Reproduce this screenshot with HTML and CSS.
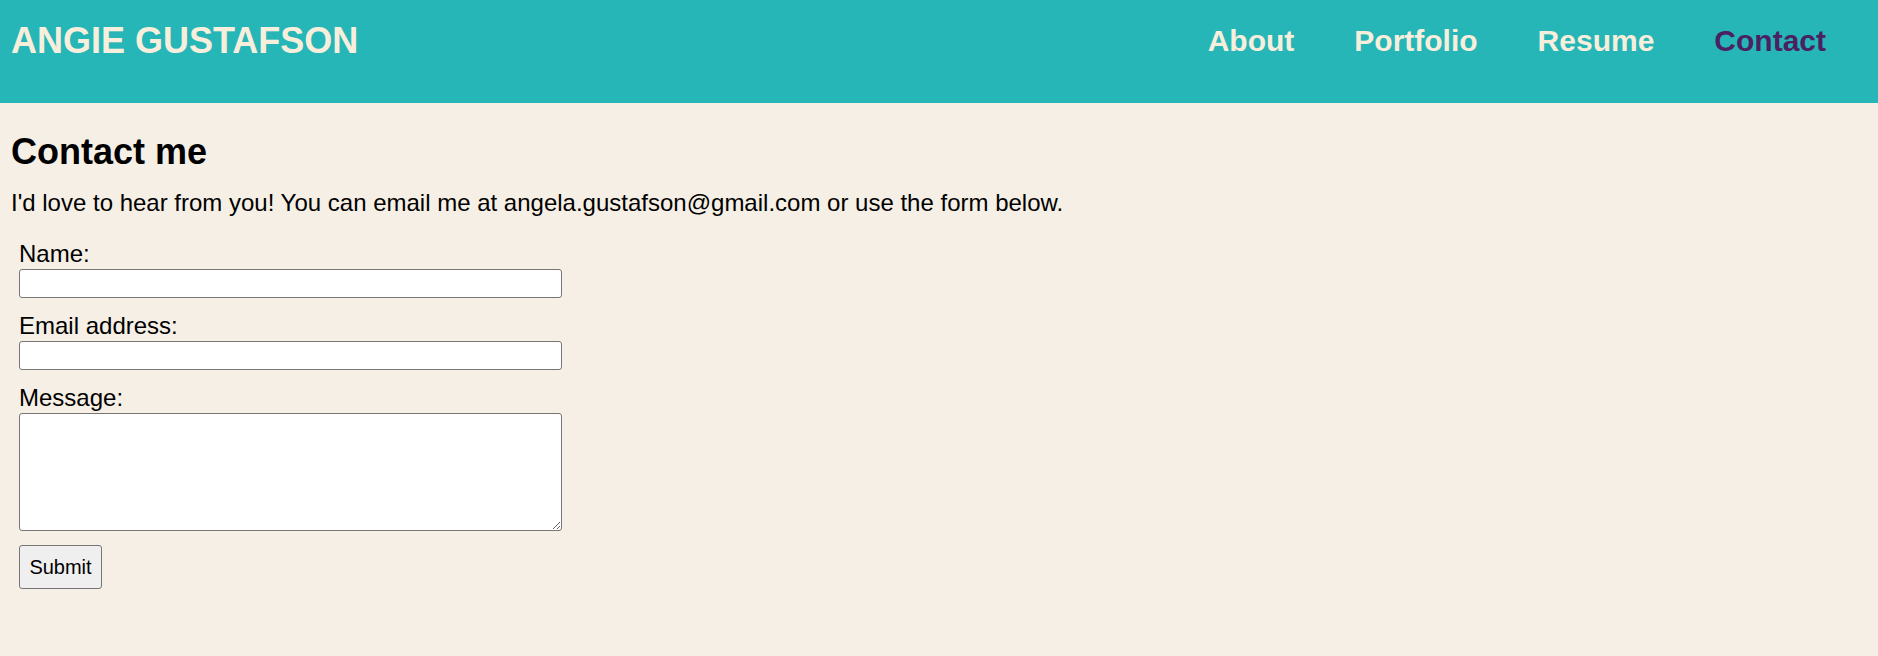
FILE: index.html
```html
<!DOCTYPE html>
<html lang="en">
<head>
<meta charset="utf-8">
<title>Contact - Angie Gustafson</title>
<link rel="stylesheet" href="styles.css">
</head>
<body>
<header class="site-header">
  <div class="brand">ANGIE GUSTAFSON</div>
  <nav class="nav">
    <a class="nav-link" href="#">About</a>
    <a class="nav-link" href="#">Portfolio</a>
    <a class="nav-link" href="#">Resume</a>
    <a class="nav-link active" href="#">Contact</a>
  </nav>
</header>
<main class="content">
  <h1 class="title">Contact me</h1>
  <p class="intro">I'd love to hear from you! You can email me at angela.gustafson@gmail.com or use the form below.</p>
  <form class="contact-form">
    <div class="field">
      <label class="label" for="name">Name:</label>
      <input class="input" id="name" type="text">
    </div>
    <div class="field">
      <label class="label" for="email">Email address:</label>
      <input class="input" id="email" type="email">
    </div>
    <div class="field">
      <label class="label" for="msg">Message:</label>
      <textarea class="textarea" id="msg"></textarea>
    </div>
    <button class="submit" type="submit">Submit</button>
  </form>
</main>
</body>
</html>
```
FILE: styles.css
```css
* { box-sizing: border-box; }
html, body {
  margin: 0;
  padding: 0;
}
body {
  background: #f6efe5;
  color: #000;
  font-family: "Liberation Sans", Arial, sans-serif;
  font-size: 24px;
}
.site-header {
  height: 103px;
  background: #26b6b7;
  display: flex;
  justify-content: space-between;
  align-items: flex-start;
  padding: 20px 52px 0 11px;
}
.brand {
  color: #f8eedc;
  font-size: 36px;
  font-weight: bold;
  line-height: 42px;
}
.nav {
  display: flex;
  gap: 60px;
  padding-top: 3px;
}
.nav-link {
  color: #f8eedc;
  font-size: 30px;
  font-weight: bold;
  line-height: 36px;
  text-decoration: none;
}
.nav-link.active {
  color: #4a2262;
}
.content {
  padding: 28px 11px 0 11px;
}
.title {
  margin: 0;
  font-size: 36px;
  font-weight: bold;
  line-height: 42px;
}
.intro {
  margin: 16px 0 23px 0;
  font-size: 24px;
  line-height: 28px;
}
.contact-form {
  margin-left: 8px;
  display: flex;
  flex-direction: column;
  align-items: flex-start;
  gap: 14px;
}
.field {
  display: flex;
  flex-direction: column;
  align-items: flex-start;
}
.label {
  font-size: 24px;
  line-height: 28px;
}
.input {
  margin-top: 1px;
  width: 543px;
  height: 29px;
  border: 1px solid #767676;
  border-radius: 3px;
  background: #fff;
  font-family: inherit;
  font-size: 20px;
}
.textarea {
  margin-top: 1px;
  width: 543px;
  height: 118px;
  border: 1px solid #767676;
  border-radius: 3px;
  background: #fff;
  font-family: inherit;
  font-size: 20px;
  resize: both;
}
.submit {
  width: 83px;
  height: 44px;
  padding: 0;
  background: #efefef;
  color: #000;
  border: 1px solid #767676;
  border-radius: 3px;
  font-family: inherit;
  font-size: 20px;
}
```
